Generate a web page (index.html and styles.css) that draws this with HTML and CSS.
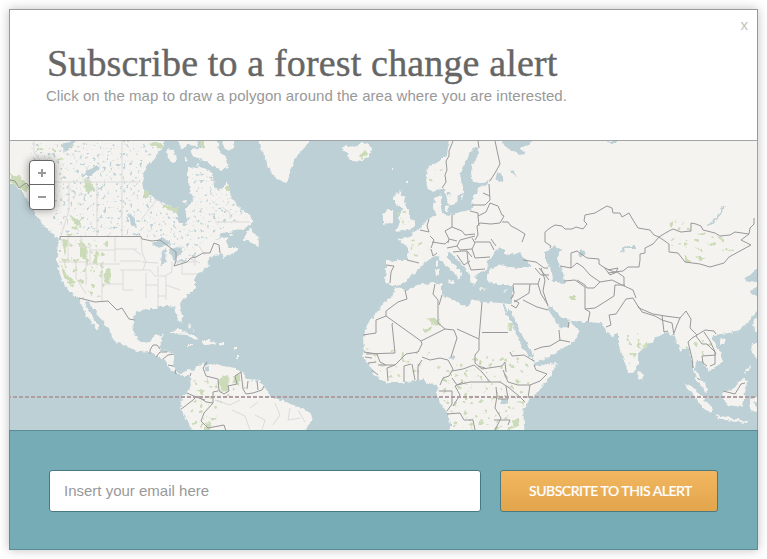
FILE: index.html
```
<!DOCTYPE html>
<html lang="en">
<head>
<meta charset="utf-8">
<title>Subscribe to a forest change alert</title>
<link rel="stylesheet" href="styles.css">
</head>
<body>
<main class="dialog">
  <header class="dialog-header">
    <button class="close" type="button">x</button>
    <h1 class="title">Subscribe to a forest change alert</h1>
    <p class="subtitle">Click on the map to draw a polygon around the area where you are interested.</p>
  </header>

  <section class="map">
    <svg class="map-canvas" viewBox="10 141 747 289" width="747" height="289" aria-hidden="true">
      <defs>
        <filter id="rough" filterUnits="userSpaceOnUse" x="0" y="130" width="767" height="310">
          <feTurbulence type="fractalNoise" baseFrequency="0.22" numOctaves="2" seed="4" result="n"/>
          <feDisplacementMap in="SourceGraphic" in2="n" scale="5" xChannelSelector="R" yChannelSelector="G"/>
        </filter>
        <filter id="lake-noise" filterUnits="userSpaceOnUse" x="10" y="141" width="260" height="120" color-interpolation-filters="sRGB">
          <feTurbulence type="fractalNoise" baseFrequency="0.3" numOctaves="2" seed="9"/>
          <feColorMatrix values="0 0 0 0 .74  0 0 0 0 .82  0 0 0 0 .84  7 0 0 0 -4.2"/>
        </filter>
        <filter id="park-noise" filterUnits="userSpaceOnUse" x="10" y="141" width="747" height="289" color-interpolation-filters="sRGB">
          <feTurbulence type="fractalNoise" baseFrequency="0.19" numOctaves="2" seed="21"/>
          <feColorMatrix values="0 0 0 0 .80  0 0 0 0 .86  0 0 0 0 .72  0 12 0 0 -7.5"/>
        </filter>
        <clipPath id="lake-area">
          <path d="M30 143H160L140 170L141 190L176 211L180 226L195 208L190 172L209 170L220 193L225 190L248 217L215 232L190 254L170 243L145 236H62L35 190Z"/>
        </clipPath>
        <clipPath id="park-area">
          <path d="M59 236H108V295L84 300L64 284L59 264ZM30 145H75V160H30ZM62 215H90V236H62ZM408 238L432 242L428 260L409 258ZM428 170L442 163L444 187L430 189ZM396 199L403 201L412 225L400 229ZM437 365L520 350L532 372L517 430H452L448 408L440 398ZM190 378L220 372L248 388L224 398L212 430H195L185 410ZM620 325L645 335L655 338L636 360L628 366ZM365 348L430 352L420 375L385 378ZM678 340L712 340L716 358L690 352ZM665 215L745 245L730 260L668 245Z"/>
        </clipPath>
      </defs>

      <g filter="url(#rough)">
        <!-- Land -->
        <g class="land">
          <path d="M0 130H164L164 145L158 154L155 159L148 164L144 172L142 182L143 189L148 194L155 199L163 203L170 206L176 208L178 216L180 223L184 225L187 221L186 214L185 209L190 204L193 198L190 190L188 180L188 168L200 167L211 171L213 178L214 187L219 191L224 187L226 181L229 187L231 197L235 203L240 208L247 213L252 218L252 224L243 229L235 231L222 233L214 241L222 236L228 237L226 241L229 248L237 248L239 251L231 254L224 258L222 253L212 256L207 262L210 266L203 269L198 274L195 280L195 287L185 298L180 303L181 311L183 320L182 323L178 319L175 312L174 307L168 306L160 306L155 309L149 309L141 310L135 314L133 322L134 332L138 340L143 343L150 342L154 336L163 335L162 341L159 346L160 350L167 351L174 353L174 360L173 366L176 371L181 374L188 370L193 371L197 366L203 362L205 366L210 364L223 366L235 368L242 373L248 380L260 381L265 387L269 395L280 400L293 405L307 410L312 415L311 421L305 431V440H196L187 420L180 408L182 398L191 388L190 376L183 376L176 373L170 369L164 360L157 355L148 351L139 352L128 347L118 343L111 338L110 331L104 322L98 316L94 309L89 303L85 302L87 307L92 315L97 324L99 329L95 327L91 321L86 315L84 310L81 304L78 298L72 294L66 288L63 283L60 274L57 262L57 250L59 240L52 233L44 226L37 217L32 210L28 200L22 192L14 184L0 183Z"/>
          <path d="M189 151L200 147L206 135H217L219 150L226 158L228 168L220 170L212 165L203 160L193 156ZM220 135H236L233 148L229 151L224 148ZM167 149L173 150L177 158L173 163L168 158ZM178 135H200L197 146L188 145L180 150ZM183 157L188 159L185 162ZM195 163L200 164L197 166ZM183 201L187 200L186 204Z"/>
          <path d="M256 135L263 152L268 168L275 178L287 183L290 172L295 158L305 147L315 135Z"/>
          <path d="M343 145L348 147L353 146L361 144L368 142L372 148L370 156L362 161L353 160L347 158L349 154L342 149Z"/>
          <path d="M250 227L243 240L252 242L259 247L258 236L252 233ZM229 233L234 235L230 236Z"/>
          <path d="M170 333L177 329L187 332L195 336L200 340L192 339L186 334ZM202 344L204 340L210 340L216 343L208 345ZM188 344H193V346H188ZM220 343H225V345H220ZM188 324L191 326L190 330ZM192 329L194 333L192 332ZM236 355H238V358H236ZM235 347H237V349H235Z"/>
          <path d="M450 130L447 155L438 162L428 168L426 175L427 187L433 192L442 188L445 190L447 200L450 206L457 203L458 195L463 192L463 187L461 178L462 168L468 158L473 148L478 148L479 153L473 162L471 173L473 182L482 183L490 181L488 185L478 187L478 192L473 197L472 208L467 211L457 212L452 215L442 214L441 207L441 195L435 198L434 208L436 215L430 218L425 223L420 228L413 232L412 236L407 238L398 239L403 243L408 248L407 260L397 260L386 261L386 268L385 282L392 286L405 283L412 275L420 267L425 262L430 258L437 256L442 262L452 270L457 277L458 281L462 275L461 271L453 265L447 257L447 252L450 251L455 258L465 267L468 273L473 285L477 283L475 277L480 272L487 270L488 262L492 257L495 252L500 247L505 250L505 254L510 255L518 252L527 260L530 267L517 268L500 265L490 269L487 275L490 283L500 285L513 285L513 295L510 304L500 303L482 302L472 299L467 307L458 303L450 298L442 295L442 285L433 283L417 285L407 290L395 288L392 297L385 302L377 312L367 325L363 338L364 348L363 355L368 363L375 375L387 383L403 383L422 379L428 384L437 385L438 397L440 403L447 412L450 425V440H525L523 408L537 392L550 377L557 363L547 364L535 367L532 358L523 350L517 335L508 315L508 308L511 312L522 335L532 353L534 362L550 357L560 350L570 345L581 332L573 325L570 320L568 327L560 328L557 323L553 317L547 308L551 307L557 313L563 318L572 321L587 322L600 323L605 328L608 333L613 337L618 333L618 343L623 357L628 372L632 373L638 365L638 353L650 343L660 335L668 332L675 337L678 345L680 351L688 348L692 358L693 370L698 382L705 392L708 393L705 383L700 377L695 370L696 360L702 360L708 372L722 362L720 350L713 343L713 335L722 334L740 330L750 320L757 312L775 300V130Z"/>
          <path d="M400 190L393 197L395 203L403 210L398 217L400 222L396 232L413 229L416 222L410 220L410 215L404 202L405 197L401 195ZM387 210L393 210L393 222L383 225L383 215Z"/>
          <path d="M436 262L438 261V266L436 267ZM435 269H439V276H436ZM447 281L454 280L453 284ZM478 288L487 289L480 290ZM503 291L508 289L506 292ZM460 197L464 194L462 199ZM445 206L449 205L448 211L445 211ZM391 169H392V171H391ZM407 180H408V182H407Z"/>
          <path d="M639 370L644 376L642 380L638 379ZM720 340L726 338L724 344L720 344ZM753 320L759 316V332L754 330ZM753 343L759 342V362L752 352ZM750 366L743 374L749 371ZM683 382L693 387L703 398L712 407L712 414L703 408L695 397L687 387ZM713 415L727 417L740 420L748 421V423L737 422L720 419ZM722 392L733 390L742 378L748 382L745 392L743 407L727 405L723 398ZM750 398L759 396V402L754 401L757 412L750 410Z"/>
        </g>

        <!-- Inland water -->
        <g class="water">
          <path d="M545 252L555 246L562 250L557 258L563 273L565 283L553 282L552 272L545 258ZM578 254L582 249L586 254L580 258Z"/>
          <path d="M500 135L505 147L516 153L525 155L521 148L530 144L537 135ZM497 172L502 174L504 180L499 182L496 178ZM510 169L515 171L516 177L512 174ZM760 266L745 278L750 283L760 280ZM760 284L750 292L760 298ZM608 141H617V143H609Z"/>
          <path d="M152 244L161 238L169 241L171 246L165 245L158 247ZM162 251L166 248L165 263L161 265ZM169 249L177 246L184 251L178 255L175 261L171 256ZM176 263L187 258L185 262ZM188 256L195 253V256ZM128 214L133 216L137 228L131 224ZM80 176L88 171L97 165L100 167L91 176ZM60 144L75 141L72 148L65 152ZM94 191L104 185L103 188ZM448 358L454 355V360ZM501 400L507 399L508 404L502 404ZM206 367L209 366L208 372L205 371Z"/>
          <path class="ocean-line" d="M708 225L714 222L719 216L723 206M621 252L625 247L635 247M503 303L508 316M443 197L442 201M449 192L448 196"/>
        </g>

        <path class="park" d="M10 174L20 176L31 188L26 191L10 182ZM83 179L91 180L95 191L86 192ZM123 135H132V141H123ZM144 191H149V198H144ZM164 205L178 208L177 213L163 208ZM149 142L162 144V148L152 146ZM68 213L76 219L82 227L77 226ZM80 240L87 247L86 260L80 257ZM62 238L68 240L65 256ZM96 250L99 252L97 268L93 262ZM106 269L111 268L109 284L103 281ZM61 265L70 278L76 283L70 284L63 275ZM359 156L364 150L368 155L361 159ZM200 142L204 140V148L200 147ZM226 186L230 187V191H226ZM426 318L439 319L440 326L434 325ZM424 329L432 326L431 331L424 333ZM684 255L692 262L684 262ZM695 256L706 258L700 260ZM717 237L722 236L721 240ZM570 296H576V300H571ZM219 378L229 376L228 391L222 393ZM234 376L240 373L239 385L233 383ZM512 421L519 418L520 425L514 428ZM508 324H512V332H509ZM640 348L647 343L648 346ZM205 423L211 422L210 430H205Z"/>
      </g>

      <rect x="10" y="141" width="260" height="120" filter="url(#lake-noise)" clip-path="url(#lake-area)"/>
      <rect x="10" y="141" width="747" height="289" filter="url(#park-noise)" clip-path="url(#park-area)"/>

      <!-- State and province lines -->
      <path class="state" d="M34 141V152L55 182H140M69 182V210L61 236M97 182V236M122 141V182V236M141 220L157 199M68 237V262H59M81 237V247H90V264M68 262H86V285M76 262V278L86 294M115 237V262M90 250H115M86 264H120M102 264V302M115 249H137M120 261H141M120 270H144M102 284H123M123 270V290H133M141 237L142 252L146 262L143 270M133 249L141 255M142 262L158 263M144 270H150L155 276H166M145 285H158M146 273V298M158 278V306M166 276V300M158 296H166M172 262V272L165 276M182 264V274H198M181 262L195 262M158 266V275M195 254V266M188 258L200 263M166 285L180 290M199 246L205 255M222 207L230 213V219M215 222H250M250 408L258 402M255 415L265 420L262 430M275 403L280 415L273 425M290 408L288 420L300 418M298 410L305 422M232 410L245 416L250 430M215 400L230 405L240 400"/>

      <!-- Country borders -->
      <path class="border" d="M10 180L15 181L19 188L26 183L30 187M60 240V236.500H141L142 239L152 241L160 240L168 246L176 252L176 261L174 266L187 262L191 258L196 257L203 253H210L214 243L219 245L220 253M79 298L95 302L108 301L117 310L122 308L129 319L135 320M150 354L150 350L153 345H157L160 349M156 357L160 352L167 352M163 359L168 355L174 354M168 365L173 366M175 370L176 374M190 376L191 373"/>
      <path class="border" d="M207 362L203 368L206 376L218 379L219 391L224 394L229 391L228 386L237 384L235 376L241 372L243 389L246 394L253 393L262 390L264 386M248 381L247 389M257 381L258 390M218 391L213 392V403L206 402L197 396L193 400L184 407L181 409M187 393L196 397L205 400M213 403L204 413L201 421L208 428L224 425L226 431"/>
      <path class="border" d="M453 141L449 151L449 156L446 161L447 170L445 175L446 182L442 188M478 141L479 148M495 141L498 155L500 164L495 173L490 181M489 184L490 200L485 205H472M483 193L490 196M490 203L498 206L502 215L504 216L500 223L491 224L480 223L477 226L478 235L475 240M490 203L486 212L478 216V213L470 211M478 216L479 226M452 215V227L462 231L465 235L475 234M452 227L445 231L449 239L457 241M449 239L448 243M429 219L427 226L429 232L420 230M430 236L434 240L431 248M432 242L445 244L449 240M447 248L457 246L460 240L475 236M457 246L460 250L472 249L475 243L472 238M474 242L490 242L494 250M491 239L496 246M502 222L508 222L511 226L517 229L525 234L522 242M472 249L475 258L490 257M453 252L462 251L467 251L468 262L471 270L485 269M457 255L464 265L470 261M467 251L472 257M431 249L433 256L437 253M407 260L419 263M386 265L394 266L391 272L390 283M523 260L536 262L544 268L548 268M535 268L541 275H549M539 268L545 275L549 280M513 284H538L540 278"/>
      <path class="border" d="M405 290L407 299L398 302L386 311V316L376 320V333L363 335M386 316L421 341L445 329L438 323L438 300L433 294L435 284M442 295L439 305M393 323L392 324L395 353L366 354M421 341L422 344L418 352L406 354L395 365H378M445 329L454 330L457 338L451 357M457 329L479 339L482 302M482 332.500H508M479 339L479 350L475 355L475 363L482 369L502 366L505 362L506 372M422 357L430 360L440 358L448 360L453 369L449 376L443 378L440 385M452 371L463 369L474 365L482 372L490 382L500 382M478 366L485 368M510 352L512 356L524 355L534 361M534 365L536 370L547 374L540 381L530 385L518 385L508 382L503 370M500 382L508 387L520 397L525 402M530 385L528 398M439 391L452 391V404L447 411M463 382L455 386L460 395L453 406M452 378L457 385L470 382L490 382M447 414L460 413L464 420H473L475 430M496 387L497 396L495 408L501 418L495 430M508 425L510 420L494 420M498 399H508L506 386M418 380V366L422 360M415 380L412 364M404 382L404 366L411 364M388 381L387 368L395 365M364 352L377 354L380 362L386 365M368 363L376 362M378 375L372 370M365 357L372 358"/>
      <path class="border" d="M511 299L514 293L513 285M514 302L521 298L529 293L530 284M511 305L516 308L519 303L514 300M523 300L537 307L548 310M538 284L541 294L548 305M534 350L542 347L550 346L560 340L570 342M560 341L559 330M568 328L569 322M550 248L551 246L545 242L545 232L550 228L555 225L562 226L565 229H572L576 227L583 229L587 224L584 221L585 215L595 213L600 210L607 206L612 208L613 213L620 213L622 217L629 213L633 220L638 228L650 230L654 235L659 237L653 244L645 248L645 253L640 254L640 260L639 267L628 267L623 271L614 272L605 268L599 264L599 259L587 258L577 251L571 253V268L560 266M571 268L577 263L583 267L590 275L600 282L612 280L622 285L633 290L636 298M659 237L667 232L673 229L681 232L691 231V223L696 224L701 226L703 230L715 233L720 236L730 235L735 232L749 234L750 228L754 224L754 218M749 234L741 240L751 245L740 251L729 257L724 263L710 267L700 264L685 262L678 253L669 252L669 244L659 237M604 267L610 275L617 272L624 277L624 286M608 270L618 268L616 272L608 273M600 282L594 288H587L585 285L577 280M585 287V309L590 312L588 322M564 281L575 280L585 287M585 309L595 308L603 303L614 296L615 285L625 285M606 327L611 325L609 315L616 314L622 305L626 299L633 298L639 308L646 311L653 314L665 316L680 318L686 311L691 319L690 328L697 335L692 338L688 342L692 358L693 368M638 306L642 312L655 316L662 320L672 323L674 335M662 315L664 332L668 331M674 333L677 325L680 318M697 335L705 330L714 331L716 334M696 336L702 344H707L715 352V364L710 366M704 332L710 341L716 354M716 355L702 356L703 363L707 366M697 378L700 380M723 391L735 394L741 384L745 383M541 268L545 280L543 291L548 306"/>

      <line class="equator" x1="10" y1="397" x2="757" y2="397"/>
    </svg>
    <div class="zoom">
      <button class="zoom-button zoom-in" type="button"><svg width="8" height="8" viewBox="0 0 8 8"><path d="M4 0V8M0 4H8"/></svg></button>
      <button class="zoom-button" type="button"><svg width="8" height="8" viewBox="0 0 8 8"><path d="M0 4H8"/></svg></button>
    </div>
  </section>

  <form class="subscribe">
    <input class="email" type="text" placeholder="Insert your email here">
    <button class="submit" type="button">SUBSCRITE TO THIS ALERT</button>
  </form>
</main>
</body>
</html>
```
FILE: styles.css
```
* { box-sizing: border-box; }

body {
  margin: 0;
  padding: 9px;
  background: #fff;
  font-family: "Liberation Sans", Arial, sans-serif;
  overflow: hidden;
}

.dialog {
  width: 749px;
  height: 541px;
  display: flex;
  flex-direction: column;
  background: #fff;
  box-shadow: 0 0 10px rgba(0, 0, 0, .25);
}

.dialog-header {
  position: relative;
  height: 131px;
  padding: 32px 0 0 36px;
  border: 1px solid #999;
  border-bottom: 0;
}

.close {
  position: absolute;
  top: 6px;
  right: 9px;
  padding: 0;
  border: 0;
  background: none;
  color: #c2c2c2;
  font: 15px/17px "Liberation Sans", Arial, sans-serif;
}

.title {
  margin: 0 0 0 1px;
  color: #666;
  font: 400 38px/42px "Liberation Serif", Georgia, serif;
  letter-spacing: .15px;
  -webkit-text-stroke: .4px #666;
  white-space: nowrap;
}

.subtitle {
  margin: 2px 0 0;
  color: #999;
  font-size: 15px;
  line-height: 20px;
  letter-spacing: .04px;
  white-space: nowrap;
}

.map {
  position: relative;
  height: 290px;
  border: 1px solid #a0a4a5;
  border-bottom: 0;
  background: #bdd0d6;
  overflow: hidden;
}

.map-canvas { display: block; }

.land { fill: #f4f3f0; }
.water { fill: #bdd0d6; }
.ocean-line { fill: none; stroke: #bdd0d6; stroke-width: 2; }
.park { fill: #ccdbb7; }
.state { fill: none; stroke: #dcdbd9; stroke-width: 1; }
.border { fill: none; stroke: #999; stroke-width: 1; stroke-linejoin: round; }
.equator { stroke: #af9fa3; stroke-width: 2; stroke-dasharray: 4 2; stroke-dashoffset: 3; }

.zoom {
  position: absolute;
  top: 19px;
  left: 19px;
  width: 26px;
  height: 50px;
  border: 1px solid #666;
  border-radius: 4px;
  background: #fff;
  box-shadow: 0 0 8px rgba(0, 0, 0, .4);
}

.zoom-button {
  display: flex;
  align-items: center;
  justify-content: center;
  width: 24px;
  height: 24px;
  padding: 0;
  border: 0;
  background: none;
}

.zoom-in { border-bottom: 1px solid #666; }
.zoom-button path { stroke: #999; stroke-width: 2; }

.subscribe {
  display: flex;
  align-items: center;
  gap: 19px;
  height: 120px;
  padding: 2px 39px 0;
  border: 1px solid #5b8c94;
  background: #75acb5;
}

.email {
  width: 432px;
  height: 42px;
  padding: 0 14px 2px;
  border: 1px solid #467982;
  border-radius: 3px;
  background: #fff;
  font: 15px "Liberation Sans", Arial, sans-serif;
}

.email::placeholder { color: #999; opacity: 1; }

.submit {
  width: 218px;
  height: 42px;
  padding: 0 0 2px 3px;
  border: 1px solid #4c7b7f;
  border-radius: 3px;
  background: linear-gradient(#f2b760, #e2a54c);
  color: #fff;
  font: 500 14px Lato, sans-serif;
  letter-spacing: -.48px;
  -webkit-text-stroke: .2px #fff;
  white-space: nowrap;
}
```
